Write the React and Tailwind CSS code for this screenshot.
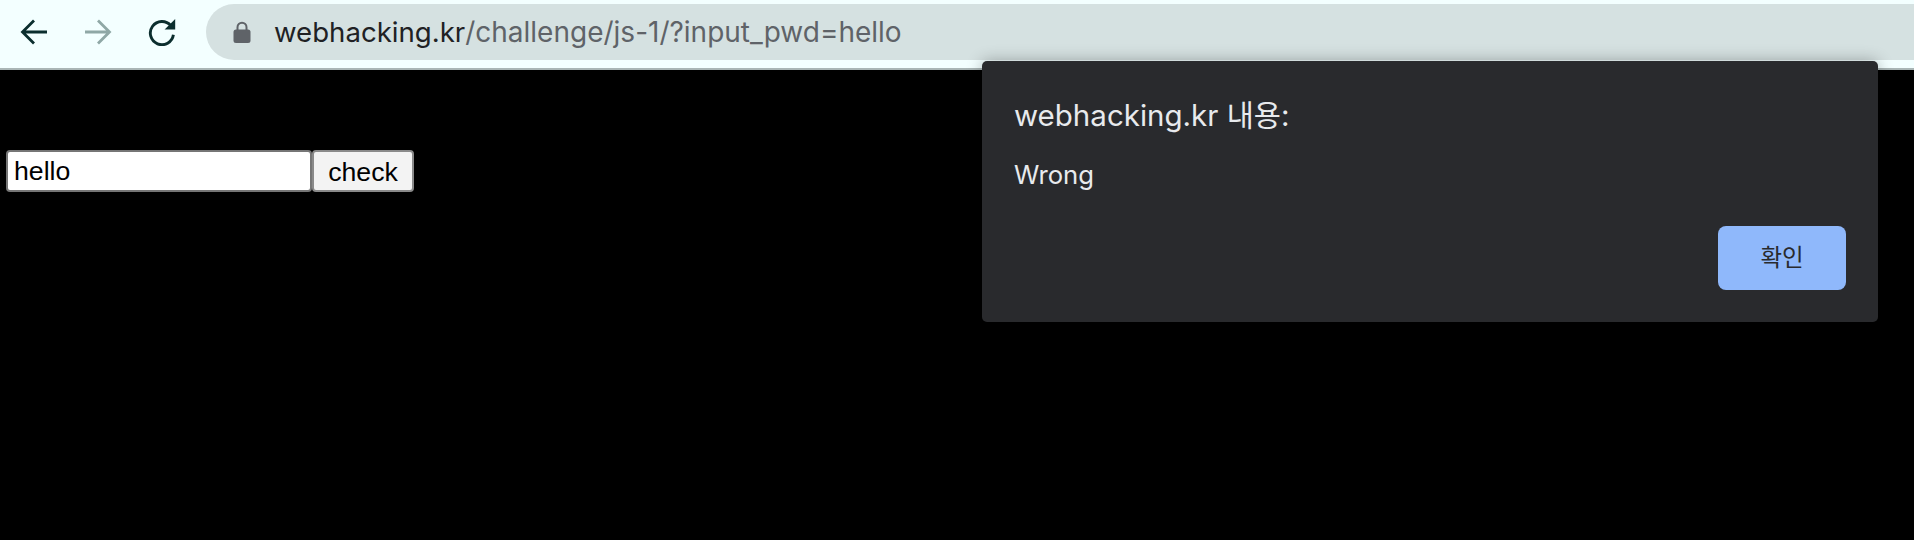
const sans = "font-['Inter','Noto_Sans_CJK_KR',sans-serif]";

function NavIcon({ color, flip }) {
  return (
    <svg width="28" height="28" viewBox="0 0 28 28" fill="none" stroke={color} strokeWidth="2.8" className={flip ? "-scale-x-100" : ""}>
      <path d="M27 14H3M14 2.5L2.5 14 14 25.5" />
    </svg>
  );
}

function ReloadIcon() {
  return (
    <svg width="28" height="28" viewBox="0 0 28 28" fill="none">
      <path d="M22.8 7.6A11.6 11.6 0 1 0 25.4 16.8" stroke="#0b2e2e" strokeWidth="2.9" />
      <path d="M27.2 1V11.6H16.6Z" fill="#0b2e2e" />
    </svg>
  );
}

function LockIcon() {
  return (
    <svg width="18" height="22" viewBox="0 0 18 22" fill="none">
      <path d="M4.5 9.5V6.2a4.5 4.5 0 0 1 9 0v3.3" stroke="#5f6368" strokeWidth="2" />
      <rect x="0.5" y="8.5" width="17" height="13.5" rx="2.5" fill="#5f6368" />
    </svg>
  );
}

export default function App() {
  return (
    <div className={`relative h-[540px] w-[1914px] overflow-hidden bg-black ${sans}`}>
      {/* browser toolbar */}
      <div className="flex h-[70px] items-start border-b-2 border-[#a9b5b5] bg-[#f3ffff]">
        <div className="flex h-[64px] w-[206px] shrink-0 items-center gap-[36px] pl-[20px]">
          <NavIcon color="#0b2e2e" />
          <NavIcon color="#8fa8a6" flip />
          <ReloadIcon />
        </div>
        <div className="mt-[4px] flex h-[56px] flex-1 items-center rounded-l-[28px] bg-[#d5e1e1] pl-[27px]">
          <LockIcon />
          <span className="mt-[1px] ml-[23px] text-[28px] leading-none whitespace-nowrap text-[#5f6368]">
            <span className="text-[27.6px] text-[#202124]">webhacking.kr</span>/challenge/js-1/?input_pwd=hello
          </span>
        </div>
      </div>

      {/* page */}
      <div className="flex items-start pt-[80px] pl-[6px] font-['Liberation_Sans',Arial,sans-serif] text-[26.67px] text-black">
        <input
          readOnly
          value="hello"
          className="h-[42px] w-[306px] rounded-[4px] border-2 border-[#767676] bg-white px-[6px] outline-none"
        />
        <button className="h-[42px] w-[102px] rounded-[4px] border-2 border-[#8a8a8a] bg-[#f3f3f3]">check</button>
      </div>

      {/* alert dialog */}
      <div className="absolute top-[61px] left-[982px] flex h-[261px] w-[896px] flex-col rounded-[5px] bg-[#292a2d] pt-[38px] pr-[32px] pl-[32px] shadow-[0_0_16px_rgba(0,0,0,0.3)]">
        <div className="text-[29.5px] leading-[32px] text-[#e8eaed]">webhacking.kr 내용:</div>
        <div className="mt-[29px] text-[25.7px] leading-[30px] text-[#e8eaed]">Wrong</div>
        <div className="mt-[36px] flex justify-end">
          <button className="flex h-[64px] w-[128px] items-center justify-center rounded-[8px] bg-[#8fb8fb] text-[23.5px] font-normal text-[#292a2d]">
            확인
          </button>
        </div>
      </div>
    </div>
  );
}
